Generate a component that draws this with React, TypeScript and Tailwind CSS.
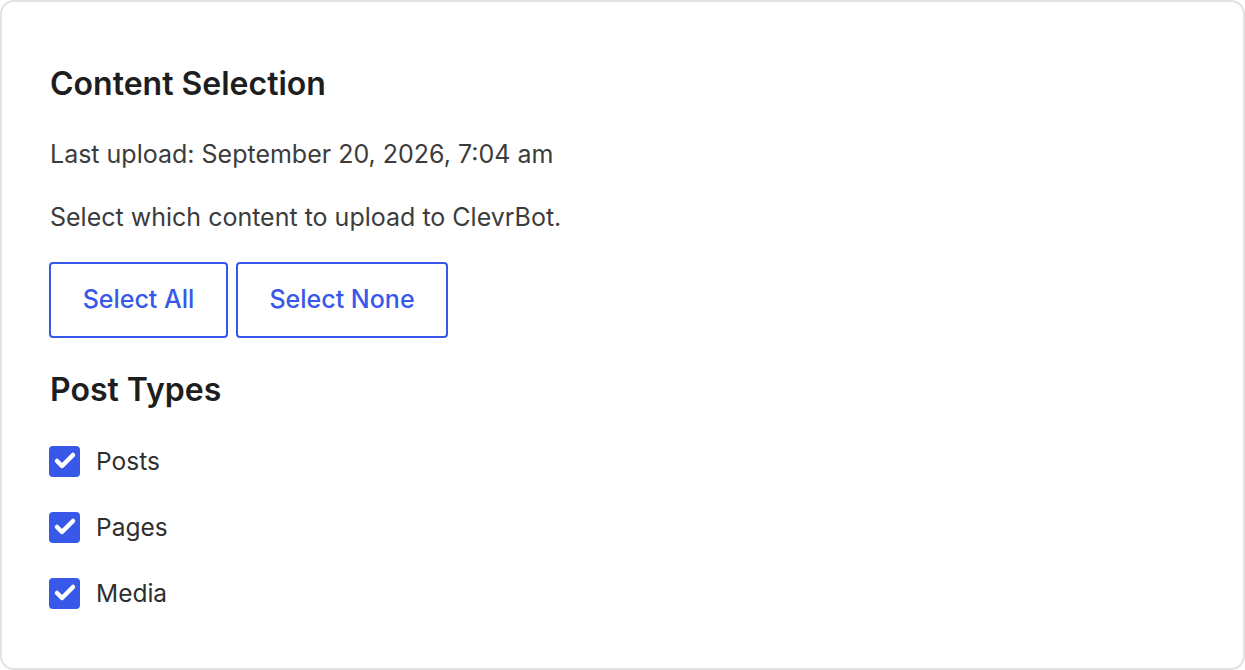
import { Check } from 'lucide-react';

const items = ['Posts', 'Pages', 'Media'];

function CheckRow({ label }: { label: string }) {
  return (
    <label className="flex items-center gap-[16px] h-[30px] -ml-px">
      <span className="w-[31px] h-[31px] rounded-[4px] bg-[#3858e9] flex items-center justify-center">
        <Check size={24} strokeWidth={4.5} className="text-white" />
      </span>
      <span className="text-[24.5px] text-[#2f2f2f] leading-[30px]">{label}</span>
    </label>
  );
}

export default function App() {
  return (
    <div className="w-[1245px] h-[670px] bg-white" style={{ fontFamily: 'Inter, "Noto Sans", sans-serif' }}>
      <div className="w-full h-full border-2 border-[#e2e2e2] rounded-[14px] bg-white px-[48px] pt-[62px]">
        <h2 className="text-[32px] font-semibold text-[#1e1e1e] leading-[40px]">Content Selection</h2>
        <p className="mt-[35px] text-[25px] text-[#3c3c3c] leading-[30px]">
          Last upload: September 20, 2026, 7:04 am
        </p>
        <p className="mt-[33px] text-[25px] text-[#3c3c3c] leading-[30px]">
          Select which content to upload to ClevrBot.
        </p>
        <div className="mt-[30px] -ml-px flex gap-2">
          <button className="h-[76px] w-[179px] border-2 border-[#3858e9] rounded-[4px] text-[25px] font-medium text-[#3858e9]">
            Select All
          </button>
          <button className="h-[76px] w-[212px] border-2 border-[#3858e9] rounded-[4px] text-[25px] font-medium text-[#3858e9]">
            Select None
          </button>
        </div>
        <h3 className="mt-[32px] text-[32px] font-semibold text-[#1e1e1e] leading-[40px]">Post Types</h3>
        <div className="mt-[36px] flex flex-col gap-[36px]">
          {items.map((i) => (
            <CheckRow key={i} label={i} />
          ))}
        </div>
      </div>
    </div>
  );
}
